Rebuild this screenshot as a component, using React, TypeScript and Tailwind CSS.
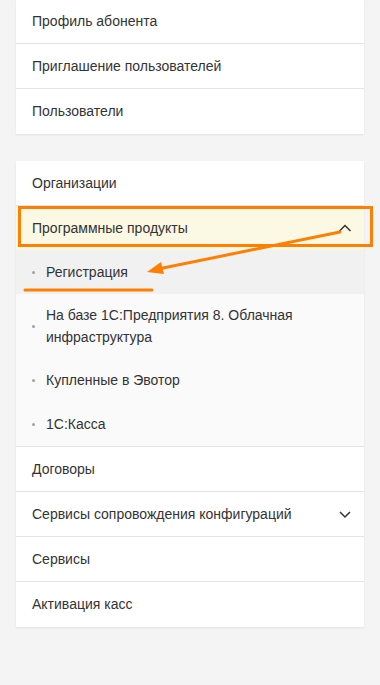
import React from "react";

const font = { fontFamily: '"Liberation Sans", Arial, sans-serif' };

function Row({ children, icon, last }: { children: React.ReactNode; icon?: React.ReactNode; last?: boolean }) {
  return (
    <div
      className={`flex h-[45px] items-center justify-between pl-4 pr-[12px] text-[14px] text-[#333] ${last ? "" : "border-b border-[#e4e4e4]"}`}
    >
      <span>{children}</span>
      {icon}
    </div>
  );
}

function Chevron({ up }: { up?: boolean }) {
  return (
    <svg width="14" height="14" viewBox="0 0 14 14">
      <path
        d={up ? "M1.5 10 L7 4.5 L12.5 10" : "M2 5 L7 10 L12 5"}
        fill="none"
        stroke="#333"
        strokeWidth="1.5"
        strokeLinecap="butt"
      />
    </svg>
  );
}

function SubItem({ children, className = "" }: { children: React.ReactNode; className?: string }) {
  return (
    <div className={`flex items-center pl-4 pr-4 text-[14px] leading-[22px] text-[#333] ${className}`}>
      <span className="mr-[11px] h-[3px] w-[3px] shrink-0 rounded-full bg-[#a0a0a0]" />
      <span>{children}</span>
    </div>
  );
}

export default function App() {
  return (
    <div className="relative min-h-[685px] w-[380px] bg-[#f4f4f4] px-4" style={font}>
      <div className="bg-white shadow-[0_1px_2px_rgba(0,0,0,0.08)]">
        <div className="flex h-[44px] items-center border-b border-[#e4e4e4] pl-4 text-[14px] text-[#333]">
          Профиль абонента
        </div>
        <Row>Приглашение пользователей</Row>
        <Row last>Пользователи</Row>
      </div>

      <div className="mt-[27px] bg-white shadow-[0_1px_2px_rgba(0,0,0,0.08)]">
        <Row>Организации</Row>
        <div className="flex h-[44px] items-center justify-between bg-[#fbf8e3] pl-4 pr-[12px] text-[14px] text-[#333]">
          <span>Программные продукты</span>
          <Chevron up />
        </div>
        <div className="border-b border-[#e4e4e4] bg-[#fafafa]">
          <SubItem className="h-[44px] bg-[#f1f1f1]">Регистрация</SubItem>
          <SubItem className="py-[10px]">
            На базе 1С:Предприятия 8. Облачная
            <br />
            инфраструктура
          </SubItem>
          <SubItem className="h-[44px]">Купленные в Эвотор</SubItem>
          <SubItem className="h-[44px]">1С:Касса</SubItem>
        </div>
        <Row>Договоры</Row>
        <Row icon={<Chevron />}>Сервисы сопровождения конфигураций</Row>
        <Row>Сервисы</Row>
        <Row last>Активация касс</Row>
      </div>

      {/* annotations */}
      <div className="pointer-events-none absolute left-[18px] top-[206px] h-[41px] w-[355px] border-[3px] border-[#ff7f00]" />
      <svg className="pointer-events-none absolute left-0 top-0" width="380" height="685">
        <line x1="340" y1="232" x2="158" y2="269" stroke="#ff7f00" strokeWidth="3" strokeLinecap="round" />
        <polygon points="147,272 161,262 164,274" fill="#ff7f00" />
        <line x1="25" y1="290" x2="152" y2="290" stroke="#ff7f00" strokeWidth="3" strokeLinecap="round" />
      </svg>
    </div>
  );
}
